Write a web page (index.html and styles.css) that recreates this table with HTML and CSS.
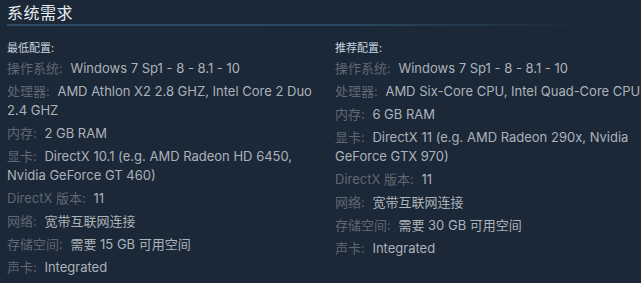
FILE: index.html
```html
<!DOCTYPE html>
<html lang="zh-CN">
<head>
<meta charset="utf-8">
<title>系统需求</title>
<link rel="stylesheet" href="styles.css">
</head>
<body>
<div class="sysreq">
  <h2 class="title">系统需求</h2>
  <div class="cols">
    <div class="col">
      <div class="head">最低配置:</div>
      <ul class="reqs">
        <li><span class="lbl">操作系统:</span> Windows 7 Sp1 - 8 - 8.1 - 10</li>
        <li><span class="lbl">处理器:</span> AMD Athlon X2 2.8 GHZ, Intel Core 2 Duo 2.4 GHZ</li>
        <li><span class="lbl">内存:</span> 2 GB RAM</li>
        <li><span class="lbl">显卡:</span> DirectX 10.1 (e.g. AMD Radeon HD 6450, Nvidia GeForce GT 460)</li>
        <li><span class="lbl">DirectX 版本:</span> 11</li>
        <li><span class="lbl">网络:</span> 宽带互联网连接</li>
        <li><span class="lbl">存储空间:</span> 需要 15 GB 可用空间</li>
        <li><span class="lbl">声卡:</span> Integrated</li>
      </ul>
    </div>
    <div class="col">
      <div class="head">推荐配置:</div>
      <ul class="reqs">
        <li><span class="lbl">操作系统:</span> Windows 7 Sp1 - 8 - 8.1 - 10</li>
        <li><span class="lbl">处理器:</span> AMD Six-Core CPU, Intel Quad-Core CPU</li>
        <li><span class="lbl">内存:</span> 6 GB RAM</li>
        <li><span class="lbl">显卡:</span> DirectX 11 (e.g. AMD Radeon 290x, Nvidia GeForce GTX 970)</li>
        <li><span class="lbl">DirectX 版本:</span> 11</li>
        <li><span class="lbl">网络:</span> 宽带互联网连接</li>
        <li><span class="lbl">存储空间:</span> 需要 30 GB 可用空间</li>
        <li><span class="lbl">声卡:</span> Integrated</li>
      </ul>
    </div>
  </div>
</div>
</body>
</html>
```

FILE: styles.css
```css
html, body {
  margin: 0;
  padding: 0;
  background: #1b2838;
}

body {
  font-family: Inter, "Noto Sans CJK SC", sans-serif;
  color: #acb2b8;
  font-size: 13px;
}

.sysreq {
  padding: 0 0 0 7px;
}

.title {
  margin: 0;
  padding: 1px 0 3px;
  font-size: 16px;
  line-height: 22px;
  font-weight: normal;
  letter-spacing: 0.5px;
  color: #e9edf0;
  font-family: "Noto Sans CJK SC", sans-serif;
  background-image: linear-gradient(to right, #2e4b64 0%, #2b475f 55%, rgba(43, 71, 95, 0) 92%);
  background-repeat: no-repeat;
  background-position: left bottom;
  background-size: 100% 2px;
}

.cols {
  display: grid;
  grid-template-columns: 308px 306px;
  column-gap: 20px;
  margin-top: 13px;
}

.head {
  font-family: "Noto Sans CJK SC", sans-serif;
  font-size: 11px;
  line-height: 16px;
  color: #c6d4df;
  margin-bottom: 4px;
}

.reqs {
  list-style: none;
  margin: 0;
  padding: 0;
}

.reqs li {
  line-height: 19px;
  margin-bottom: 4px;
}

.lbl {
  color: #5f6771;
  padding-right: 4px;
}
```
